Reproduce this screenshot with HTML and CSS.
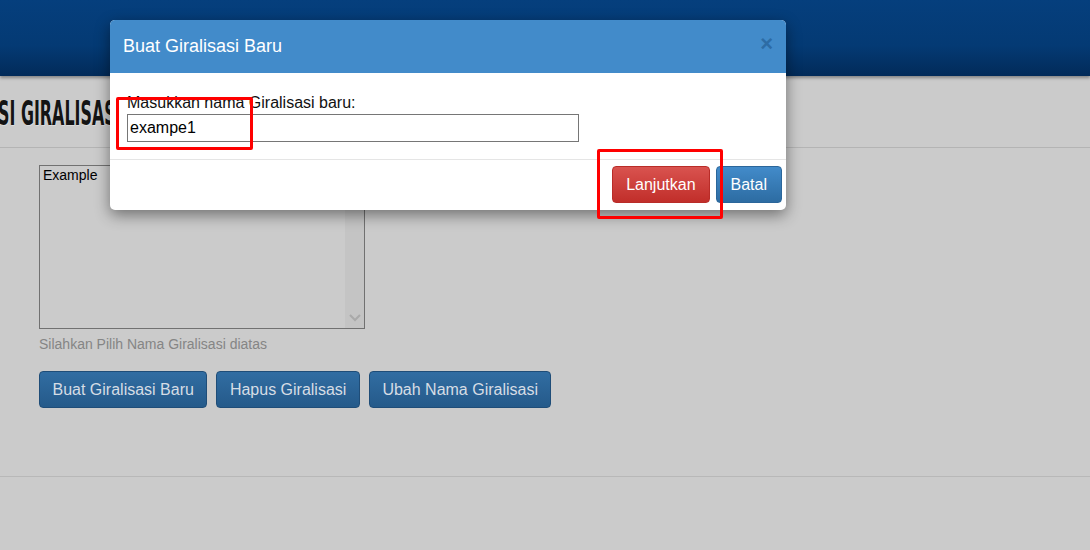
FILE: index.html
```html
<!DOCTYPE html>
<html lang="en">
<head>
  <meta charset="UTF-8">
  <title>Giralisasi</title>
  <link rel="stylesheet" href="styles.css">
</head>
<body>
  <div class="topbar"></div>

  <div class="page">
    <div class="page-title">
      <h1><span>SI GIRALISASI</span></h1>
    </div>

    <div class="panel">
      <div class="listbox">
        <div class="list-items">
          <div class="list-item">Example</div>
        </div>
        <div class="list-scroll">
          <svg width="12" height="8" viewBox="0 0 12 8"><path d="M1 1 L6 6 L11 1" fill="none" stroke="#a9a9a9" stroke-width="2"/></svg>
        </div>
      </div>
      <p class="help">Silahkan Pilih Nama Giralisasi diatas</p>
      <div class="actions">
        <button class="btn btn-blue">Buat Giralisasi Baru</button>
        <button class="btn btn-blue">Hapus Giralisasi</button>
        <button class="btn btn-blue">Ubah Nama Giralisasi</button>
      </div>
    </div>
  </div>

  <!-- Modal -->
  <div class="modal">
    <div class="modal-header">
      <h4>Buat Giralisasi Baru</h4>
      <span class="close">&times;</span>
    </div>
    <div class="modal-body">
      <label for="nama">Masukkan nama Giralisasi baru:</label>
      <input type="text" id="nama" value="exampe1">
    </div>
    <div class="modal-footer">
      <button class="btn btn-red">Lanjutkan</button>
      <button class="btn btn-primary">Batal</button>
    </div>
  </div>

  <!-- annotation boxes -->
  <div class="mark mark-input"></div>
  <div class="mark mark-button"></div>
</body>
</html>
```

FILE: styles.css
```css
body, html {
  margin: 0;
  padding: 0;
  height: 100%;
  background-color: #cbcbcb;
  font-family: "Liberation Sans", Arial, sans-serif;
  overflow: hidden;
}

.topbar {
  height: 76px;
  background: linear-gradient(to bottom, #053f7d 0%, #043a74 60%, #022b59 100%);
  box-shadow: 0 2px 3px rgba(0, 0, 0, 0.35);
}

.page-title {
  height: 71px;
  display: flex;
  align-items: center;
  border-bottom: 1px solid #b4b4b4;
}

.page-title h1 {
  margin: 3px 0 0 -2px;
  font-family: "Liberation Sans Narrow", "DejaVu Sans Condensed", sans-serif;
  font-weight: bold;
  font-size: 34px;
  line-height: 40px;
  color: #141414;
  text-shadow: 1px 1px 0 rgba(255, 255, 255, 0.35);
}

.page-title h1 span {
  display: inline-block;
  transform: scaleX(0.52);
  transform-origin: left center;
  white-space: nowrap;
}

.panel {
  padding: 17px 39px 68px;
  border-bottom: 1px solid #b8b8b8;
}

.listbox {
  width: 324px;
  height: 162px;
  border: 1px solid #717171;
  display: flex;
}

.list-items {
  flex: 1;
  padding: 1px 3px;
  font-size: 14px;
  color: #000;
}

.list-scroll {
  width: 19px;
  background: #c4c4c4;
  display: flex;
  align-items: flex-end;
  justify-content: center;
  padding-bottom: 6px;
  box-sizing: border-box;
}

.help {
  margin: 5px 0 17px;
  font-size: 14px;
  line-height: 20px;
  color: #858585;
}

.actions {
  display: flex;
  gap: 9px;
}

.btn {
  height: 37px;
  padding: 0 12px;
  font-family: "Liberation Sans", Arial, sans-serif;
  font-size: 16px;
  border-radius: 4px;
  cursor: pointer;
}

.btn-blue {
  padding: 0 12.5px;
  color: #d6dde5;
  background: linear-gradient(to bottom, #316da2 0%, #255a8a 100%);
  border: 1px solid #1f4d78;
}

.modal {
  position: absolute;
  top: 20px;
  left: 110px;
  width: 676px;
  background: white;
  border-radius: 5px;
  box-shadow: 0 5px 15px rgba(0, 0, 0, 0.45);
  overflow: hidden;
}

.modal-header {
  height: 53px;
  background: #428bca;
  display: flex;
  align-items: center;
  justify-content: space-between;
  padding: 0 13px;
}

.modal-header h4 {
  margin: 0;
  font-size: 18px;
  font-weight: normal;
  color: white;
}

.close {
  font-size: 22px;
  font-weight: bold;
  color: #2d6ca5;
  line-height: 1;
  margin-top: -6px;
}

.modal-body {
  padding: 20px 17px 17px;
}

.modal-body label {
  display: block;
  font-size: 16px;
  line-height: 20px;
  color: #111;
}

.modal-body input {
  display: block;
  margin-top: 1px;
  width: 452px;
  height: 28px;
  box-sizing: border-box;
  border: 1px solid #767676;
  padding: 0 2px;
  font-family: "Liberation Sans", Arial, sans-serif;
  font-size: 16px;
  color: #000;
}

.modal-footer {
  border-top: 1px solid #e5e5e5;
  padding: 6px 4px 7px;
  display: flex;
  justify-content: flex-end;
  gap: 6px;
}

.btn-red {
  padding: 0 13px;
  color: white;
  background: linear-gradient(to bottom, #d9534f 0%, #c12e2a 100%);
  border: 1px solid #b92c28;
}

.btn-primary {
  padding: 0 14px;
  color: white;
  background: linear-gradient(to bottom, #428bca 0%, #2d6ca2 100%);
  border: 1px solid #2b669a;
}

.mark {
  position: absolute;
  border: 3px solid #ff0000;
  border-radius: 2px;
  box-sizing: border-box;
}

.mark-input {
  left: 116px;
  top: 97px;
  width: 137px;
  height: 53px;
}

.mark-button {
  left: 597px;
  top: 149px;
  width: 126px;
  height: 70px;
}
```
